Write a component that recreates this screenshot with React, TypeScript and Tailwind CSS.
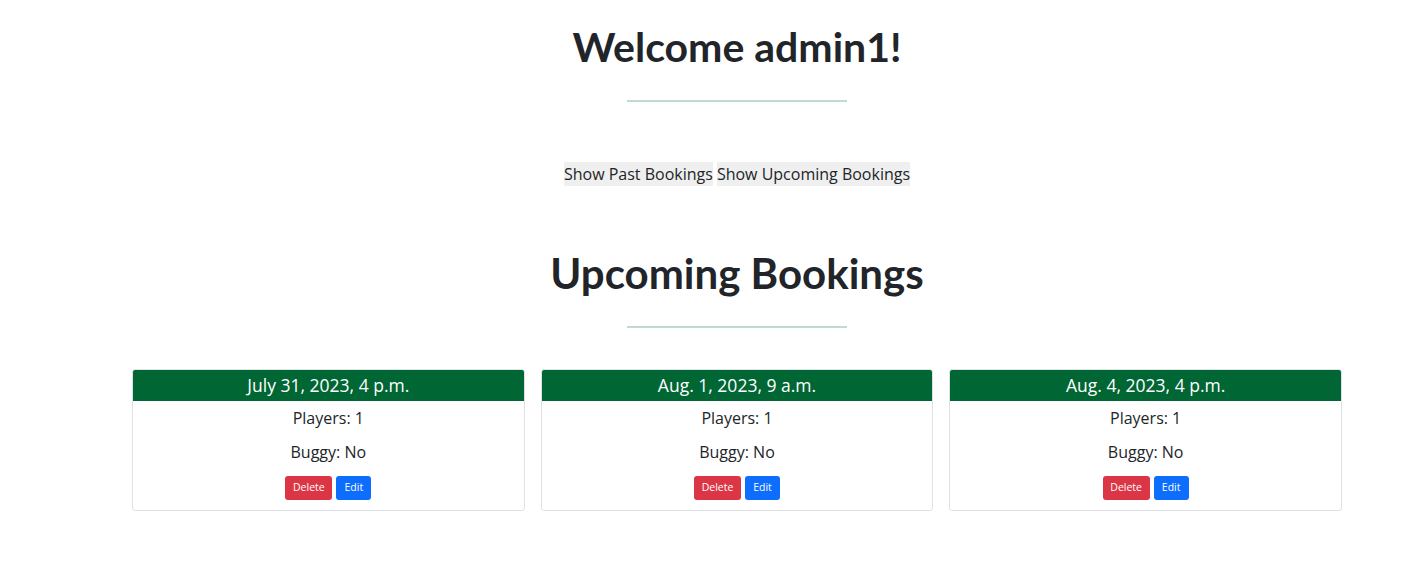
import React from "react";

const bookings = [
  { date: "July 31, 2023, 4 p.m.", players: 1, buggy: "No" },
  { date: "Aug. 1, 2023, 9 a.m.", players: 1, buggy: "No" },
  { date: "Aug. 4, 2023, 4 p.m.", players: 1, buggy: "No" },
];

const heading = { fontFamily: "Lato, 'Noto Sans', sans-serif" };

export default function App() {
  return (
    <div className="min-h-[564px] bg-white text-[#212529]" style={{ fontFamily: "'Open Sans', 'Noto Sans', sans-serif" }}>
      <div className="ml-[132px] w-[1210px] flex flex-col items-center">
        <h1 className="mt-[23px] text-[41px] leading-[48px] font-bold text-[#212529]" style={heading}>
          Welcome admin1!
        </h1>
        <div className="mt-[29px] h-[2px] w-[220px] bg-[#bfdbd0]" />
        <div className="mt-[60px] flex gap-[4px] text-[16px] leading-[24px]">
          <button className="bg-[#efefef] px-0 text-[#212529]">Show Past Bookings</button>
          <button className="bg-[#efefef] px-0 text-[#212529]">Show Upcoming Bookings</button>
        </div>
        <h2 className="mt-[63px] text-[42px] leading-[48px] font-bold text-[#212529]" style={heading}>
          Upcoming Bookings
        </h2>
        <div className="mt-[29px] h-[2px] w-[220px] bg-[#bfdbd0]" />
        <div className="mt-[41px] grid w-full grid-cols-3 gap-[16px]">
          {bookings.map((b, i) => (
            <div key={i} className="overflow-hidden rounded-[3px] border border-[#dee2e6] text-center">
              <div className="flex h-[31px] items-center justify-center bg-[#006633] text-[17.5px] text-white">
                {b.date}
              </div>
              <div className="pt-[5px] pb-[10px]">
                <p className="mb-[10px] text-[16px] leading-[24px]">Players: {b.players}</p>
                <p className="mb-[12px] text-[16px] leading-[24px]">Buggy: {b.buggy}</p>
                <div className="flex justify-center gap-[4px]">
                  <button className="h-[24px] w-[47px] rounded-[3px] bg-[#dc3545] text-[10.5px] font-medium text-white">Delete</button>
                  <button className="h-[24px] w-[35px] rounded-[3px] bg-[#0d6efd] text-[10.5px] font-medium text-white">Edit</button>
                </div>
              </div>
            </div>
          ))}
        </div>
      </div>
    </div>
  );
}
